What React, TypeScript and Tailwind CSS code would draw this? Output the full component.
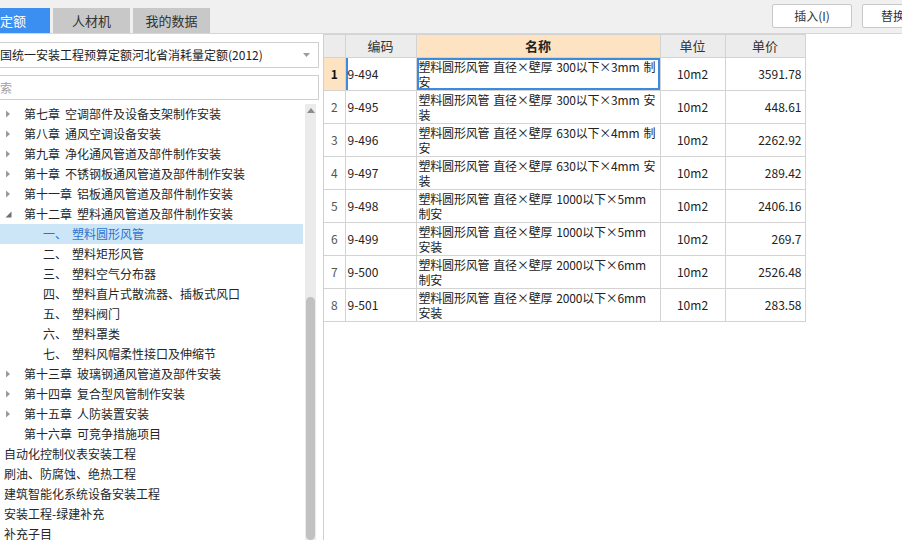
import React from 'react';

// tree rows on the left side
interface TreeItem {
  num?: string;
  text: string;
  level: 0 | 1 | 2;
  arrow?: 'closed' | 'open';
  selected?: boolean;
}

const TREE: TreeItem[] = [
  { num: '第七章', text: '空调部件及设备支架制作安装', level: 1, arrow: 'closed' },
  { num: '第八章', text: '通风空调设备安装', level: 1, arrow: 'closed' },
  { num: '第九章', text: '净化通风管道及部件制作安装', level: 1, arrow: 'closed' },
  { num: '第十章', text: '不锈钢板通风管道及部件制作安装', level: 1, arrow: 'closed' },
  { num: '第十一章', text: '铝板通风管道及部件制作安装', level: 1, arrow: 'closed' },
  { num: '第十二章', text: '塑料通风管道及部件制作安装', level: 1, arrow: 'open' },
  { num: '一、', text: '塑料圆形风管', level: 2, selected: true },
  { num: '二、', text: '塑料矩形风管', level: 2 },
  { num: '三、', text: '塑料空气分布器', level: 2 },
  { num: '四、', text: '塑料直片式散流器、插板式风口', level: 2 },
  { num: '五、', text: '塑料阀门', level: 2 },
  { num: '六、', text: '塑料罩类', level: 2 },
  { num: '七、', text: '塑料风帽柔性接口及伸缩节', level: 2 },
  { num: '第十三章', text: '玻璃钢通风管道及部件安装', level: 1, arrow: 'closed' },
  { num: '第十四章', text: '复合型风管制作安装', level: 1, arrow: 'closed' },
  { num: '第十五章', text: '人防装置安装', level: 1, arrow: 'closed' },
  { num: '第十六章', text: '可竞争措施项目', level: 1 },
  { text: '自动化控制仪表安装工程', level: 0 },
  { text: '刷油、防腐蚀、绝热工程', level: 0 },
  { text: '建筑智能化系统设备安装工程', level: 0 },
  { text: '安装工程-绿建补充', level: 0 },
  { text: '补充子目', level: 0 },
];

// quota rows in the grid
const ROWS = [
  { n: 1, code: '9-494', l1: '塑料圆形风管 直径×壁厚 300以下×3mm 制', l2: '安', price: '3591.78' },
  { n: 2, code: '9-495', l1: '塑料圆形风管 直径×壁厚 300以下×3mm 安', l2: '装', price: '448.61' },
  { n: 3, code: '9-496', l1: '塑料圆形风管 直径×壁厚 630以下×4mm 制', l2: '安', price: '2262.92' },
  { n: 4, code: '9-497', l1: '塑料圆形风管 直径×壁厚 630以下×4mm 安', l2: '装', price: '289.42' },
  { n: 5, code: '9-498', l1: '塑料圆形风管 直径×壁厚 1000以下×5mm', l2: '制安', price: '2406.16' },
  { n: 6, code: '9-499', l1: '塑料圆形风管 直径×壁厚 1000以下×5mm', l2: '安装', price: '269.7' },
  { n: 7, code: '9-500', l1: '塑料圆形风管 直径×壁厚 2000以下×6mm', l2: '制安', price: '2526.48' },
  { n: 8, code: '9-501', l1: '塑料圆形风管 直径×壁厚 2000以下×6mm', l2: '安装', price: '283.58' },
];

const Arrow = ({ type }: { type: 'closed' | 'open' }) =>
  type === 'closed' ? (
    <svg width="6" height="8" viewBox="0 0 6 8" className="shrink-0">
      <path d="M1 0.5 L5 4 L1 7.5 Z" fill="#9a9a9a" />
    </svg>
  ) : (
    <svg width="7" height="7" viewBox="0 0 7 7" className="shrink-0">
      <path d="M6.5 0.5 L6.5 6.5 L0.5 6.5 Z" fill="#6f6f6f" />
    </svg>
  );

// SimSun-like spacing: wide gaps between words
const Spaced = ({ line }: { line: string }) => (
  <>
    {line.split(' ').map((w, i) => (
      <span key={i} className={i ? 'ml-[4px]' : ''}>
        {w}
      </span>
    ))}
  </>
);

const App: React.FC = () => {
  return (
    <div className="w-[902px] h-[540px] overflow-hidden bg-white flex flex-col font-['Noto_Sans_CJK_SC',sans-serif] text-[12px] text-[#222]">
      {/* top bar with tabs */}
      <div className="h-[34px] shrink-0 bg-[#f0f0f0] border-b border-[#d6d6d6] flex items-end overflow-hidden">
        <div className="h-[25px] w-[50px] bg-[#3b8ff0] text-white text-[13px] flex items-center">定额</div>
        <div className="h-[25px] w-[77px] ml-[3px] bg-[#c8c8c8] text-[#333] text-[13px] flex items-center justify-center">人材机</div>
        <div className="h-[25px] w-[77px] ml-[3px] bg-[#c8c8c8] text-[#333] text-[13px] flex items-center justify-center">我的数据</div>
        <div className="ml-auto self-start mt-[4px] flex gap-[10px] -mr-[30px]">
          <button className="w-[80px] h-[24px] bg-white border border-[#c9c9c9] rounded-[2px] text-[12px] text-[#333]">插入(I)</button>
          <button className="w-[70px] h-[24px] bg-white border border-[#c9c9c9] rounded-[2px] text-[12px] text-[#333] text-left pl-[18px]">替换</button>
        </div>
      </div>

      <div className="flex flex-1 min-h-0">
        {/* left panel */}
        <div className="w-[319px] shrink-0 flex flex-col">
          <div className="mt-[8px] h-[26px] border border-[#cfcfcf] border-l-0 flex items-center justify-between pr-[8px]">
            <span className="whitespace-nowrap text-[12px] text-[#222]">国统一安装工程预算定额河北省消耗量定额(2012)</span>
            <svg width="7" height="4" viewBox="0 0 7 4">
              <path d="M0 0 L7 0 L3.5 4 Z" fill="#9c9c9c" />
            </svg>
          </div>
          <div className="mt-[7px] h-[25px] border border-[#cfcfcf] border-l-0 flex items-center text-[#a0a0a0]">索</div>
          <div className="mt-[4px] flex flex-1 min-h-0">
            <div className="flex-1 min-w-0 flex flex-col">
              {TREE.map((it, i) => (
                <div
                  key={i}
                  className={`h-[20px] shrink-0 flex items-center whitespace-nowrap ${
                    it.selected ? 'bg-[#cce5f7] text-[#2b73cf]' : 'text-[#262626]'
                  }`}
                >
                  {it.level === 0 && <span className="pl-[4px]">{it.text}</span>}
                  {it.level === 1 && (
                    <>
                      <span className="w-[24px] shrink-0 flex justify-center pr-[8px]">
                        {it.arrow && <Arrow type={it.arrow} />}
                      </span>
                      <span>{it.num}</span>
                      <span className="ml-[5px]">{it.text}</span>
                    </>
                  )}
                  {it.level === 2 && (
                    <>
                      <span className="inline-block w-[29px] ml-[43px] shrink-0">{it.num}</span>
                      <span>{it.text}</span>
                    </>
                  )}
                </div>
              ))}
            </div>
            {/* scrollbar */}
            <div className="w-[16px] shrink-0 flex justify-center pl-[2px] pr-[3px]">
              <div className="w-[11px] bg-[#ebebeb] flex flex-col items-center">
                <svg width="8" height="5" viewBox="0 0 8 5" className="mt-[4px]">
                  <path d="M0 5 L4 0 L8 5 Z" fill="#8c8c8c" />
                </svg>
                <div className="mt-[184px] w-[9px] flex-1 bg-[#c1c1c1] rounded-full"></div>
              </div>
            </div>
          </div>
        </div>

        {/* splitter */}
        <div className="w-[5px] shrink-0 border-r border-[#d0d0d0]"></div>

        {/* right grid */}
        <div className="flex-1 min-w-0">
          <table className="w-[481px] table-fixed border-collapse text-[12px]">
            <colgroup>
              <col className="w-[21px]" />
              <col className="w-[71px]" />
              <col className="w-[244px]" />
              <col className="w-[65px]" />
              <col className="w-[80px]" />
            </colgroup>
            <thead>
              <tr className="h-[23px]">
                <th className="border border-[#d3d3d3] border-l-0 bg-[#ececec] font-normal"></th>
                <th className="border border-[#d3d3d3] bg-[#ececec] font-normal text-[13px] text-[#333]">编码</th>
                <th className="border border-[#d3d3d3] bg-[#fde3c2] font-bold text-[13px] text-[#222]">名称</th>
                <th className="border border-[#d3d3d3] bg-[#ececec] font-normal text-[13px] text-[#333]">单位</th>
                <th className="border border-[#d3d3d3] bg-[#ececec] font-normal text-[13px] text-[#333]">单价</th>
              </tr>
            </thead>
            <tbody>
              {ROWS.map((r) => {
                const first = r.n === 1;
                return (
                  <tr key={r.n} className="h-[33px]">
                    <td
                      className={`border border-[#d3d3d3] border-l-0 text-center p-0 ${
                        first ? 'bg-[#fde3c2] font-bold text-[#111]' : 'text-[#555]'
                      }`}
                    >
                      {r.n}
                    </td>
                    <td
                      className={`border border-[#d3d3d3] p-0 pl-[2px] ${
                        first ? 'shadow-[inset_2px_0_0_#3b8be0]' : ''
                      }`}
                    >
                      {r.code}
                    </td>
                    <td
                      className={`border border-[#d3d3d3] p-0 pl-[2px] align-top leading-[15px] pt-[1px] whitespace-nowrap overflow-hidden tracking-[-0.2px] ${
                        first ? 'shadow-[inset_0_0_0_2px_#3b8be0]' : ''
                      }`}
                    >
                      <div>
                        <Spaced line={r.l1} />
                      </div>
                      <div>{r.l2}</div>
                    </td>
                    <td className="border border-[#d3d3d3] text-center p-0">10m2</td>
                    <td className="border border-[#d3d3d3] text-right p-0 pr-[3px]">{r.price}</td>
                  </tr>
                );
              })}
            </tbody>
          </table>
        </div>
      </div>
    </div>
  );
};

export default App;
